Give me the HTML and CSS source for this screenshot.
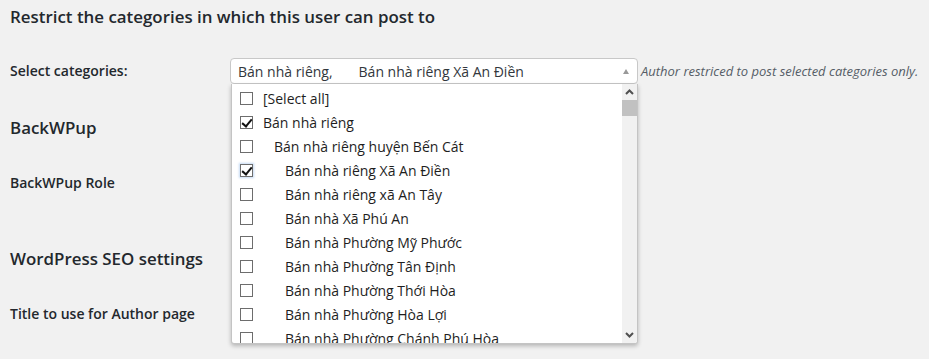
FILE: index.html
```html
<!DOCTYPE html>
<html>
<head>
<meta charset="utf-8">
<link rel="stylesheet" href="styles.css">
</head>
<body>
<div class="wrap">
  <h2 class="sec-title first">Restrict the categories in which this user can post to</h2>
  <div class="row row-select">
    <div class="label">Select categories:</div>
    <div class="field">
      <div class="select-wrap">
        <div class="select">
          <span class="sel-item">Bán nhà riêng,</span>
          <span class="sel-item sel-gap">Bán nhà riêng Xã An Điền</span>
          <span class="arrow"></span>
        </div>
        <div class="dropdown">
          <ul class="list">
            <li class="opt"><span class="cb"></span><span class="txt">[Select all]</span></li>
            <li class="opt"><span class="cb checked"></span><span class="txt">Bán nhà riêng</span></li>
            <li class="opt lvl1"><span class="cb"></span><span class="txt">Bán nhà riêng huyện Bến Cát</span></li>
            <li class="opt lvl2"><span class="cb checked focus"></span><span class="txt">Bán nhà riêng Xã An Điền</span></li>
            <li class="opt lvl2"><span class="cb"></span><span class="txt">Bán nhà riêng xã An Tây</span></li>
            <li class="opt lvl2"><span class="cb"></span><span class="txt">Bán nhà Xã Phú An</span></li>
            <li class="opt lvl2"><span class="cb"></span><span class="txt">Bán nhà Phường Mỹ Phước</span></li>
            <li class="opt lvl2"><span class="cb"></span><span class="txt">Bán nhà Phường Tân Định</span></li>
            <li class="opt lvl2"><span class="cb"></span><span class="txt">Bán nhà Phường Thới Hòa</span></li>
            <li class="opt lvl2"><span class="cb"></span><span class="txt">Bán nhà Phường Hòa Lợi</span></li>
            <li class="opt lvl2"><span class="cb"></span><span class="txt">Bán nhà Phường Chánh Phú Hòa</span></li>
          </ul>
          <div class="scrollbar">
            <span class="sb-btn"><svg width="9" height="6" viewBox="0 0 9 6"><path d="M1 5 L4.5 1.5 L8 5" fill="none" stroke="#505050" stroke-width="2"/></svg></span>
            <span class="sb-thumb"></span>
            <span class="sb-track"></span>
            <span class="sb-btn"><svg width="9" height="6" viewBox="0 0 9 6"><path d="M1 1 L4.5 4.5 L8 1" fill="none" stroke="#505050" stroke-width="2"/></svg></span>
          </div>
        </div>
      </div>
      <span class="desc">Author restriced to post selected categories only.</span>
    </div>
  </div>

  <h2 class="sec-title s2">BackWPup</h2>
  <div class="row row-plain r2">
    <div class="label">BackWPup Role</div>
  </div>

  <h2 class="sec-title s3">WordPress SEO settings</h2>
  <div class="row row-plain r3">
    <div class="label">Title to use for Author page</div>
  </div>
</div>
</body>
</html>
```

FILE: styles.css
```css
* { box-sizing: border-box; }
html, body { margin: 0; padding: 0; }
body {
  background: #f1f1f1;
  font-family: "Open Sans", "Noto Sans", sans-serif;
  color: #23282d;
  font-size: 14px;
  width: 929px;
  height: 359px;
  overflow: hidden;
}
.wrap { padding-left: 10px; }
.sec-title {
  font-size: 16.9px;
  font-weight: 600;
  line-height: 24px;
  margin: 0;
  color: #23282d;
}
.sec-title.first { padding-top: 5px; }
.row { display: flex; align-items: center; }
.row-select { margin-top: 29px; height: 26px; }
.label {
  width: 220px;
  font-weight: 600;
  font-size: 14px;
  line-height: 20px;
  flex: none;
}
.field { display: flex; align-items: center; }
.select-wrap { position: relative; width: 408px; flex: none; }
.select {
  height: 26px;
  border: 1px solid #c8c8c8;
  border-radius: 4px;
  background: #fff;
  display: flex;
  align-items: center;
  padding-left: 7px;
  font-size: 14px;
  color: #32373c;
  position: relative;
}
.sel-gap { margin-left: 26px; }
.arrow {
  position: absolute;
  right: 8px;
  top: 10px;
  width: 0; height: 0;
  border-left: 3.5px solid transparent;
  border-right: 3.5px solid transparent;
  border-bottom: 5px solid #999;
}
.desc {
  font-style: italic;
  font-size: 13px;
  color: #555d66;
  margin-left: 3px;
}
.dropdown {
  position: absolute;
  left: 1px;
  top: 26px;
  width: 407px;
  height: 260px;
  background: #fff;
  border: 1px solid #c4c4c4;
  border-top: none;
  border-radius: 0 0 3px 3px;
  box-shadow: 0 2px 4px rgba(0,0,0,0.25);
  display: flex;
  overflow: hidden;
  z-index: 5;
}
.list {
  list-style: none;
  margin: 0;
  padding: 2px 0 0 8px;
  flex: 1;
  overflow: hidden;
}
.opt {
  display: flex;
  align-items: center;
  height: 24px;
  font-size: 14px;
  color: #1e1e1e;
  white-space: nowrap;
}
.cb {
  width: 13px;
  height: 13px;
  border: 1px solid #6d6d6d;
  background: #fff;
  flex: none;
  position: relative;
  margin-right: 10px;
}
.cb.checked::after {
  content: "";
  position: absolute;
  left: 3px;
  top: 0px;
  width: 4px;
  height: 8px;
  border-right: 2px solid #111;
  border-bottom: 2px solid #111;
  transform: rotate(40deg);
}
.cb.focus { box-shadow: 0 0 2px 1px rgba(90,150,220,0.35); }
.lvl1 .txt { margin-left: 11px; }
.lvl2 .txt { margin-left: 22px; }
.scrollbar {
  width: 15px;
  flex: none;
  background: #f1f1f1;
  display: flex;
  flex-direction: column;
}
.sb-btn {
  height: 16px;
  display: flex;
  align-items: center;
  justify-content: center;
  flex: none;
}
.sb-thumb { height: 16px; background: #c1c1c1; flex: none; }
.sb-track { flex: 1; }
.r2, .r3 { height: 20px; }
.s2 { margin-top: 32px; }
.r2 { margin-top: 33px; }
.s3 { margin-top: 54px; }
.r3 { margin-top: 33px; }
```
